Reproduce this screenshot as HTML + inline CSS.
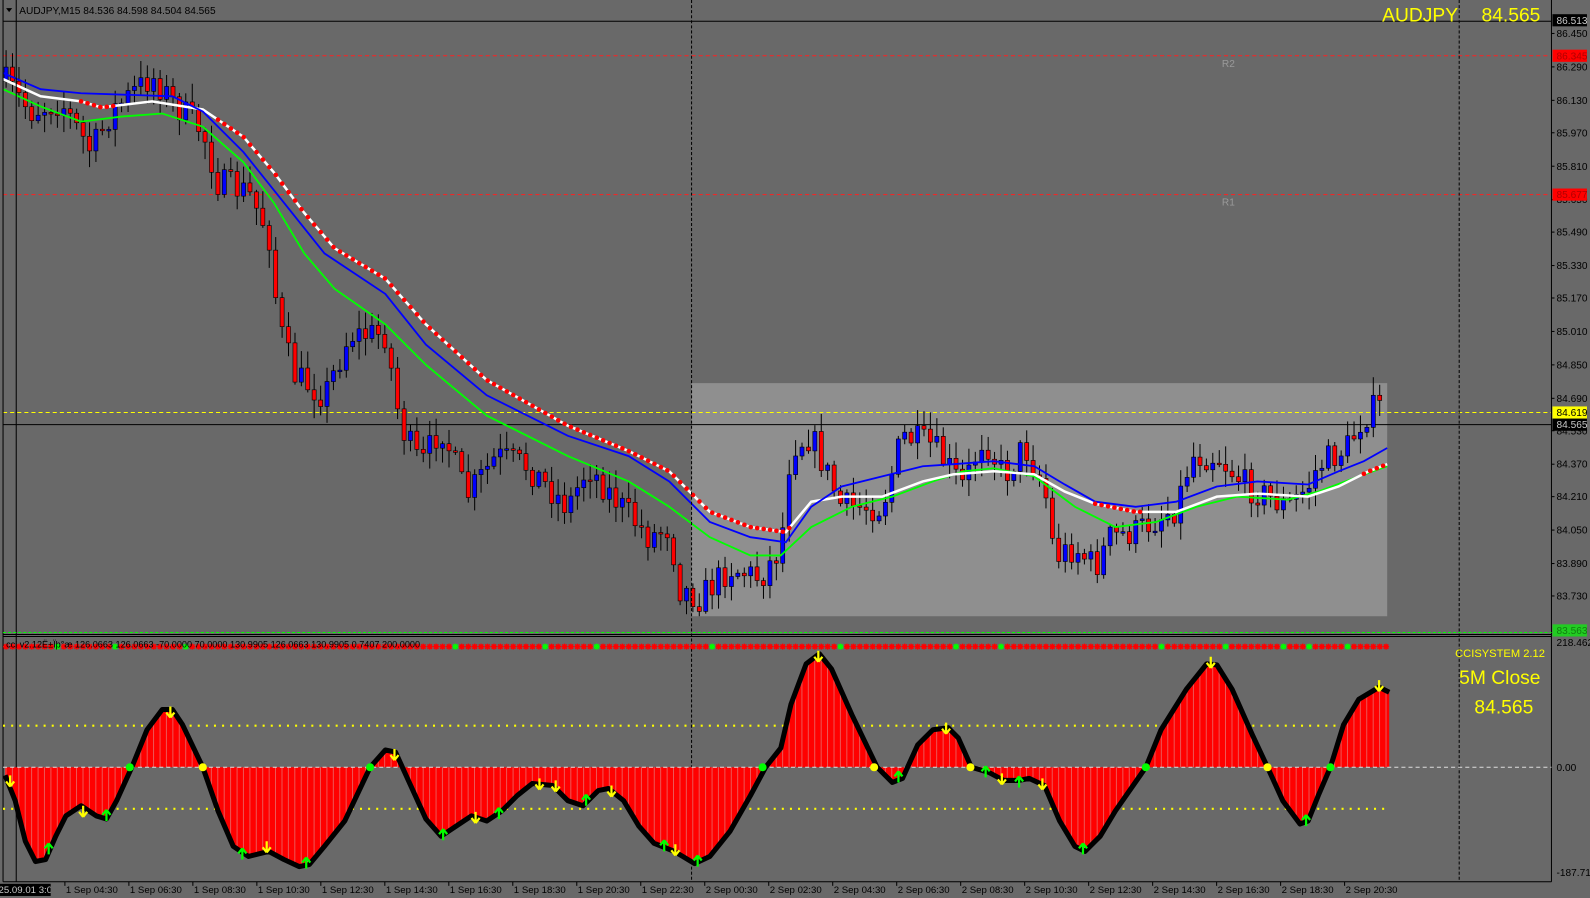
<!DOCTYPE html>
<html><head><meta charset="utf-8"><style>
html,body{margin:0;padding:0;background:#696969;overflow:hidden}
svg{display:block}
text{font-family:"Liberation Sans",sans-serif}
</style></head><body>
<svg id="s" width="1590" height="898" viewBox="0 0 1568 886" preserveAspectRatio="none" xmlns="http://www.w3.org/2000/svg">
<defs>
<pattern id="stripe" width="6.33" height="10" patternUnits="userSpaceOnUse"><rect width="6.33" height="10" fill="#ff0000"/><rect x="5.5" width="0.8" height="10" fill="#e86a6a"/></pattern>
<clipPath id="dc"><rect x="0" y="872" width="50" height="12"/></clipPath>
</defs>
<rect width="1568" height="886" fill="#696969"/>
<rect x="682" y="378" width="686" height="230" fill="#8f8f8f"/>
<line x1="3" y1="55" x2="1530" y2="55" stroke="#ff2020" stroke-dasharray="4,3"/>
<line x1="3" y1="192" x2="1530" y2="192" stroke="#ff2020" stroke-dasharray="4,3"/>
<line x1="3" y1="407" x2="1530" y2="407" stroke="#ffff00" stroke-dasharray="4,3"/>
<line x1="3" y1="419" x2="1530" y2="419" stroke="#000"/>
<text x="1205" y="66" font-size="10" fill="#9a9a9a">R2</text>
<text x="1205" y="203" font-size="10" fill="#9a9a9a">R1</text>
<g id="candles"></g>
<polyline id="green" fill="none" stroke="#00ff00" stroke-width="1.8"/>
<polyline id="white" fill="none" stroke="#ffffff" stroke-width="2.5"/>
<polyline id="blue" fill="none" stroke="#0000ff" stroke-width="1.8"/>
<g id="reddots"></g>
<line x1="3" y1="21" x2="1530" y2="21" stroke="#000"/>
<line x1="3" y1="0" x2="3" y2="870" stroke="#000"/>
<line x1="16" y1="0" x2="16" y2="870" stroke="#000"/>
<line x1="1530" y1="0" x2="1530" y2="870" stroke="#000"/>
<line x1="682" y1="0" x2="682" y2="870" stroke="#000" stroke-dasharray="3,2"/>
<line x1="1439" y1="0" x2="1439" y2="870" stroke="#000" stroke-dasharray="3,2"/>
<line x1="3" y1="624" x2="1530" y2="624" stroke="#00ff00" stroke-dasharray="3,2"/>
<line x1="3" y1="626" x2="1530" y2="626" stroke="#000"/>
<line x1="3" y1="628" x2="1530" y2="628" stroke="#000"/>
<line x1="3" y1="870" x2="1530" y2="870" stroke="#000"/>
<path d="M6 8 L12 8 L9 12 Z" fill="#000"/>
<text x="19" y="14" font-size="10" fill="#000">AUDJPY,M15  84.536 84.598 84.504 84.565</text>
<text x="1363" y="21" font-size="19" fill="#ffff00">AUDJPY</text>
<text x="1461" y="21" font-size="19" fill="#ffff00">84.565</text>
<line x1="3" y1="716" x2="1370" y2="716" stroke="#ffff00" stroke-width="2" stroke-dasharray="2,6"/>
<line x1="3" y1="798" x2="1370" y2="798" stroke="#ffff00" stroke-width="2" stroke-dasharray="2,6"/>
<polygon id="fill" fill="url(#stripe)"/>
<line x1="3" y1="757" x2="1530" y2="757" stroke="#dddddd" stroke-dasharray="4,3"/>
<polyline id="cci" fill="none" stroke="#000" stroke-width="5" stroke-linejoin="round"/>
<g id="stars"></g>
<g id="marks"></g>
<text x="6" y="639" font-size="9" fill="#000">cci v2.12Ë±Ïþ°æ 126.0663 126.0663 -70.0000 70.0000 130.9905 126.0663 130.9905 0.7407 200.0000</text>
<text x="1435" y="648" font-size="11" fill="#ffff00">CCISYSTEM 2.12</text>
<text x="1439" y="675" font-size="19" fill="#ffff00">5M Close</text>
<text x="1454" y="704" font-size="19" fill="#ffff00">84.565</text>
<g id="axis" font-size="10" fill="#000"></g>
<g id="baxis" font-size="9.5" fill="#000"></g>
</svg>
<script>
(function(){
var S=document.getElementById('s'),NS='http://www.w3.org/2000/svg';
function el(t,a,p){var e=document.createElementNS(NS,t);for(var k in a)e.setAttribute(k,a[k]);(p||S).appendChild(e);return e;}
function interp(pts,x){for(var i=1;i<pts.length;i++){if(x<=pts[i][0]){var a=pts[i-1],b=pts[i];return a[1]+(b[1]-a[1])*(x-a[0])/(b[0]-a[0]);}}return pts[pts.length-1][1];}
function ps(p){return p.map(function(q){return q.join(',')}).join(' ');}
var seed=7;function rnd(){seed=(seed*16807)%2147483647;return seed/2147483647;}
var price=[[5,80],[30,110],[60,100],[90,150],[110,110],[150,75],[170,100],[200,130],[215,180],[245,190],[265,230],[275,320],[290,370],[320,390],[345,330],[380,330],[395,420],[415,460],[435,420],[460,490],[490,450],[520,460],[560,500],[580,460],[600,485],[640,530],[660,520],[670,580],[690,590],[720,560],[750,570],[770,540],[780,440],[800,430],[830,500],[870,500],[890,430],[920,440],[950,480],[970,430],[990,470],[1010,440],[1030,480],[1040,550],[1060,540],[1080,560],[1095,530],[1120,525],[1160,500],[1175,450],[1200,450],[1230,480],[1270,500],[1290,480],[1300,460],[1330,440],[1345,410],[1360,400],[1367,420]];
var g=document.getElementById('candles');var prev=80;
for(var x=6;x<=1366;x+=6.33){var c=interp(price,x)+(rnd()-0.5)*30;var o=prev;prev=c;
var hi=Math.min(o,c)-rnd()*16-2,lo=Math.max(o,c)+rnd()*16+2;
el('line',{x1:x.toFixed(1),y1:hi.toFixed(1),x2:x.toFixed(1),y2:lo.toFixed(1),stroke:'#000','stroke-width':1},g);
var bt=Math.min(o,c),h=Math.max(Math.abs(o-c),1.5);
el('rect',{x:(x-2).toFixed(1),y:bt.toFixed(1),width:4,height:h.toFixed(1),fill:c<o?'#0000ff':'#ff0000',stroke:'#000','stroke-width':0.6},g);}
var blue=[[3,72],[40,88],[80,92],[170,95],[200,110],[240,150],[280,200],[320,250],[380,290],[420,340],[480,390],[560,430],[620,450],[660,475],[700,515],[740,530],[775,535],[800,500],[830,480],[870,470],[910,460],[940,458],[980,455],[1020,460],[1050,478],[1080,495],[1120,500],[1160,495],[1200,480],[1240,475],[1290,478],[1320,465],[1345,455],[1368,442]];
var white=[[3,78],[40,95],[80,100],[100,106],[150,100],[200,108],[240,135],[270,170],[300,210],[330,245],[380,275],[420,320],[480,375],[560,420],[620,445],[660,465],[700,505],[740,520],[775,525],[800,495],[830,490],[870,490],[910,475],[940,468],[980,465],[1020,468],[1050,485],[1080,497],[1120,505],[1160,505],[1200,490],[1240,487],[1290,490],[1320,480],[1350,465],[1368,458]];
var green=[[3,88],[40,105],[80,120],[120,115],[160,112],[200,125],[240,160],[270,200],[300,250],[330,285],[380,320],[420,360],[480,410],[560,450],[620,475],[660,500],[700,530],[740,548],[770,548],[800,520],[840,500],[880,490],[920,475],[950,465],[980,462],[1020,470],[1060,500],[1100,520],[1140,515],[1180,500],[1220,490],[1270,493],[1300,485],[1340,470],[1368,460]];
document.getElementById('blue').setAttribute('points',ps(blue));
document.getElementById('white').setAttribute('points',ps(white));
document.getElementById('green').setAttribute('points',ps(green));
var rd=document.getElementById('reddots');
[[80,112],[215,780],[1080,1130],[1345,1368]].forEach(function(r){for(var x=r[0];x<=r[1];x+=6.33)el('circle',{cx:x.toFixed(1),cy:interp(white,x).toFixed(1),r:2.3,fill:'#ff0000'},rd);});
var cci=[[5,765],[15,790],[25,830],[35,850],[45,848],[55,825],[65,805],[80,795],[95,805],[105,808],[115,790],[130,757],[145,720],[160,700],[170,700],[180,715],[200,757],[215,800],[230,835],[245,845],[265,840],[280,848],[295,855],[305,853],[320,835],[340,810],[365,757],[380,740],[390,742],[405,775],[420,808],[435,825],[450,815],[465,805],[480,810],[495,800],[510,785],[525,773],[545,775],[560,790],[575,795],[590,780],[600,778],[615,790],[630,815],[645,832],[665,840],[685,852],[700,845],[720,820],[740,785],[755,757],[770,738],[780,695],[795,655],[808,645],[820,660],[840,705],[865,757],[880,772],[890,768],[905,735],[920,720],[935,718],[945,728],[958,757],[975,762],[990,770],[1005,770],[1015,768],[1030,775],[1045,810],[1060,835],[1070,840],[1085,825],[1100,800],[1130,757],[1145,720],[1170,680],[1190,655],[1200,656],[1215,680],[1235,725],[1250,757],[1265,790],[1282,813],[1290,810],[1300,785],[1312,757],[1325,715],[1340,690],[1360,678],[1370,683]];
document.getElementById('cci').setAttribute('points',ps(cci));
document.getElementById('fill').setAttribute('points',ps([[5,757]].concat(cci,[[1370,757]])));
var st=document.getElementById('stars');
var gx=[58,115,186,446,540,588,705,830,940,988,1148,1210,1268,1293,1330];
for(var x=6;x<=1368;x+=6.33){var isG=gx.some(function(v){return Math.abs(v-x)<3.2;});
var col=isG?'#00ff00':'#ff0000';var xs=x.toFixed(1),xl=(x-3).toFixed(1),xa=(x-2.2).toFixed(1),xb=(x+2.2).toFixed(1);
el('path',{d:'M'+xl+' 638 h6 M'+xs+' 635 v6 M'+xa+' 635.8 l4.4 4.4 M'+xb+' 635.8 l-4.4 4.4',stroke:col,'stroke-width':1.4},st);}
var mk=document.getElementById('marks');
function arrow(x,y,up,col){var d=up?'M'+x+' '+(y-6)+' l-4 5 M'+x+' '+(y-6)+' l4 5 M'+x+' '+(y-6)+' v11':'M'+x+' '+(y+6)+' l-4 -5 M'+x+' '+(y+6)+' l4 -5 M'+x+' '+(y+6)+' v-11';el('path',{d:d,stroke:col,'stroke-width':2.2,fill:'none'},mk);}
[[10,770],[82,800],[168,702],[263,835],[389,744],[469,806],[532,773],[548,775],[603,780],[666,838],[807,647],[933,718],[988,768],[1028,773],[1194,653],[1360,676]].forEach(function(p){arrow(p[0],p[1],false,'#ffff00');});
[[48,838],[105,805],[239,843],[302,852],[437,824],[492,803],[578,790],[655,835],[688,850],[886,767],[972,762],[1005,772],[1068,838],[1288,810]].forEach(function(p){arrow(p[0],p[1],true,'#00ff00');});
[128,365,752,1130,1312].forEach(function(x){el('circle',{cx:x,cy:757,r:4,fill:'#00ff00'},mk);});
[200,862,957,1250].forEach(function(x){el('circle',{cx:x,cy:757,r:4,fill:'#ffff00'},mk);});
var ax=document.getElementById('axis');
var labs=[['86.450',33],['86.290',66],['86.130',99],['85.970',131],['85.810',164],['85.650',197],['85.490',229],['85.330',262],['85.170',294],['85.010',327],['84.850',360],['84.690',393],['84.530',425],['84.370',458],['84.210',490],['84.050',523],['83.890',556],['83.730',588]];
labs.forEach(function(l){el('line',{x1:1530,y1:l[1],x2:1533,y2:l[1],stroke:'#000'},ax);var t=el('text',{x:1535,y:l[1]+3.5},ax);t.textContent=l[0];});
function box(txt,y,bg,fg){el('rect',{x:1531,y:y-6,width:34,height:12,fill:bg},ax);var t=el('text',{x:1535,y:y+3.5,fill:fg},ax);t.textContent=txt;}
box('86.513',20,'#000','#c8c8c8');box('86.345',55,'#ff0000','#b00000');box('85.677',192,'#ff0000','#b00000');
box('84.619',407,'#ffff00','#000');box('84.565',419,'#000','#c8c8c8');box('83.563',622,'#22cc22','#108010');
[['218.4627',634],['0.00',757],['-187.716',861]].forEach(function(l){var t=el('text',{x:1535,y:l[1]+3.5},ax);t.textContent=l[0];});
var bx=document.getElementById('baxis');
el('rect',{x:0,y:872,width:50,height:12,fill:'#000'},bx);var t0=el('text',{x:-12,y:881,fill:'#c8c8c8','clip-path':'url(#dc)'},bx);t0.textContent='2025.09.01 3:00';
var names=['1 Sep 04:30','1 Sep 06:30','1 Sep 08:30','1 Sep 10:30','1 Sep 12:30','1 Sep 14:30','1 Sep 16:30','1 Sep 18:30','1 Sep 20:30','1 Sep 22:30','2 Sep 00:30','2 Sep 02:30','2 Sep 04:30','2 Sep 06:30','2 Sep 08:30','2 Sep 10:30','2 Sep 12:30','2 Sep 14:30','2 Sep 16:30','2 Sep 18:30','2 Sep 20:30'];
names.forEach(function(n,i){var x=64+i*63.1;el('line',{x1:x,y1:870,x2:x,y2:874,stroke:'#000'},bx);var t=el('text',{x:x+1,y:881},bx);t.textContent=n;});
})();
</script>
</body></html>
